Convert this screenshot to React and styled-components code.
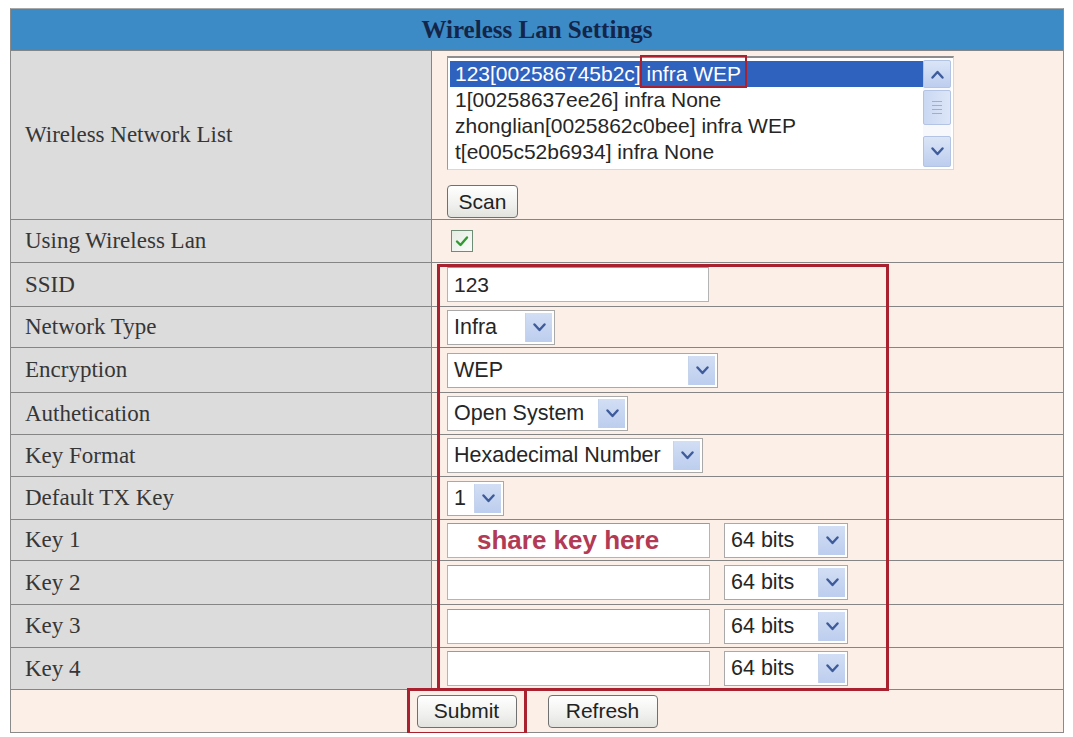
import styled, { createGlobalStyle } from "styled-components";

const GlobalStyle = createGlobalStyle`
  body {
    margin: 0;
    background: #ffffff;
  }
`;

const networks = [
  "123[002586745b2c] infra WEP",
  "1[00258637ee26] infra None",
  "zhonglian[0025862c0bee] infra WEP",
  "t[e005c52b6934] infra None",
];

function Chevron({ up }) {
  return (
    <svg width="13" height="9" viewBox="0 0 13 9">
      <path
        d={up ? "M1.5 7.5 L6.5 2 L11.5 7.5" : "M1.5 1.5 L6.5 7 L11.5 1.5"}
        fill="none"
        stroke="#3e5c9c"
        strokeWidth="2.4"
        strokeLinecap="round"
        strokeLinejoin="round"
      />
    </svg>
  );
}

function Select({ width, value }) {
  return (
    <SelectBox $w={width}>
      <SelectText>{value}</SelectText>
      <ArrowButton>
        <Chevron />
      </ArrowButton>
    </SelectBox>
  );
}

const rows = [
  { label: "SSID", h: 44, kind: "ssid" },
  { label: "Network Type", h: 41, select: ["Infra", 108] },
  { label: "Encryption", h: 45, select: ["WEP", 271] },
  { label: "Authetication", h: 42, select: ["Open System", 181] },
  { label: "Key Format", h: 42, select: ["Hexadecimal Number", 256] },
  { label: "Default TX Key", h: 43, select: ["1", 57] },
  { label: "Key 1", h: 41, kind: "key", hint: "share key here" },
  { label: "Key 2", h: 44, kind: "key" },
  { label: "Key 3", h: 43, kind: "key" },
  { label: "Key 4", h: 42, kind: "key" },
];

export default function App() {
  return (
    <Page>
      <GlobalStyle />
      <Frame>
        <Header>Wireless Lan Settings</Header>

        <Row $h={169}>
          <Label>Wireless Network List</Label>
          <Value $column>
            <ListBox>
              <ListItems>
                {networks.map((n, i) => (
                  <ListItem key={n} $selected={i === 0}>
                    {n}
                  </ListItem>
                ))}
              </ListItems>
              <ScrollBar>
                <ScrollButton $h={26}>
                  <Chevron up />
                </ScrollButton>
                <Thumb>
                  <Grip />
                  <Grip />
                  <Grip />
                  <Grip />
                </Thumb>
                <Track />
                <ScrollButton $h={29}>
                  <Chevron />
                </ScrollButton>
              </ScrollBar>
            </ListBox>
            <Button $w={71}>Scan</Button>
          </Value>
        </Row>

        <Row $h={43}>
          <Label>Using Wireless Lan</Label>
          <Value>
            <CheckBox>
              <svg width="14" height="12" viewBox="0 0 14 12">
                <path
                  d="M2 6.5 L5.5 10 L12 2.5"
                  fill="none"
                  stroke="#2f9a2f"
                  strokeWidth="2.4"
                  strokeLinecap="round"
                  strokeLinejoin="round"
                />
              </svg>
            </CheckBox>
          </Value>
        </Row>

        {rows.map((r) => (
          <Row key={r.label} $h={r.h}>
            <Label>{r.label}</Label>
            <Value>
              {r.kind === "ssid" && <TextInput $w={262}>123</TextInput>}
              {r.select && <Select value={r.select[0]} width={r.select[1]} />}
              {r.kind === "key" && (
                <>
                  <TextInput $w={263}>
                    {r.hint && <Hint>{r.hint}</Hint>}
                  </TextInput>
                  <Select value="64 bits" width={124} />
                </>
              )}
            </Value>
          </Row>
        ))}

        <FooterRow>
          <Button $w={100}>Submit</Button>
          <Button $w={110}>Refresh</Button>
        </FooterRow>

        <Mark $l={629} $t={46} $w={107} $h={33} $b={2.5} />
        <Mark $l={426} $t={255} $w={452} $h={427} $b={3} />
        <Mark $l={396} $t={679} $w={120} $h={47} $b={3} />
      </Frame>
    </Page>
  );
}

const Page = styled.div`
  padding: 8px 0 0 10px;
`;

const Frame = styled.div`
  position: relative;
  width: 1054px;
  box-sizing: border-box;
  border: 1px solid #8a8a8a;
  border-top-color: #a8a8a8;
`;

const Header = styled.div`
  height: 41px;
  background: #3c8bc6;
  display: flex;
  align-items: center;
  justify-content: center;
  font-family: "Liberation Serif", "Times New Roman", serif;
  font-weight: bold;
  font-size: 25px;
  color: #14254a;
`;

const Row = styled.div`
  display: grid;
  grid-template-columns: 421px 1fr;
  height: ${(p) => p.$h}px;
  box-sizing: border-box;
  border-top: 1px solid #858585;
`;

const Label = styled.div`
  display: flex;
  align-items: center;
  padding-left: 14px;
  background: #dcdcdc;
  border-right: 1px solid #858585;
  font-family: "Liberation Serif", "Times New Roman", serif;
  font-size: 23px;
  color: #363636;
`;

const Value = styled.div`
  display: flex;
  flex-direction: ${(p) => (p.$column ? "column" : "row")};
  align-items: ${(p) => (p.$column ? "flex-start" : "center")};
  gap: ${(p) => (p.$column ? "15px" : "14px")};
  padding: ${(p) => (p.$column ? "5px 0 0 15px" : "0 0 0 15px")};
  background: #fcefe7;
  font-family: "Liberation Sans", Arial, sans-serif;
`;

const ListBox = styled.div`
  display: flex;
  width: 507px;
  height: 114px;
  box-sizing: border-box;
  padding: 2px;
  background: #ffffff;
  border: 1px solid #d8d8d8;
  border-top: 2px solid #8d8d8d;
  border-left: 1px solid #9a9a9a;
`;

const ListItems = styled.div`
  flex: 1;
  display: flex;
  flex-direction: column;
  padding-top: 1px;
`;

const ListItem = styled.div`
  height: 26px;
  line-height: 26px;
  padding-left: 5px;
  font-size: 21px;
  white-space: nowrap;
  color: ${(p) => (p.$selected ? "#ffffff" : "#262626")};
  background: ${(p) => (p.$selected ? "#2f62bf" : "transparent")};
`;

const ScrollBar = styled.div`
  width: 28px;
  display: flex;
  flex-direction: column;
  gap: 2px;
  background: #f6f8fc;
`;

const ScrollButton = styled.div`
  height: ${(p) => p.$h}px;
  display: flex;
  align-items: center;
  justify-content: center;
  background: linear-gradient(#dbe5f7, #bccdee);
  border: 1px solid #b3c3e4;
  border-radius: 2px;
`;

const Thumb = styled.div`
  height: 33px;
  display: flex;
  flex-direction: column;
  align-items: center;
  justify-content: center;
  gap: 3px;
  background: linear-gradient(90deg, #cad8f2, #dde6f8);
  border: 1px solid #b3c3e4;
  border-radius: 2px;
`;

const Grip = styled.div`
  width: 10px;
  height: 1px;
  background: #9aaed6;
`;

const Track = styled.div`
  flex: 1;
`;

const Button = styled.div`
  width: ${(p) => p.$w}px;
  height: 33px;
  box-sizing: border-box;
  display: flex;
  align-items: center;
  justify-content: center;
  border: 1px solid #707070;
  border-radius: 4px;
  background: linear-gradient(#ffffff, #f0f0ee 60%, #e2e2de);
  font-family: "Liberation Sans", Arial, sans-serif;
  font-size: 21px;
  color: #222222;
`;

const CheckBox = styled.div`
  width: 22px;
  height: 22px;
  margin-left: 4px;
  box-sizing: border-box;
  display: flex;
  align-items: center;
  justify-content: center;
  border: 1px solid #6f8c76;
  background: linear-gradient(135deg, #e6ece4, #fbfcfa);
`;

const TextInput = styled.div`
  width: ${(p) => p.$w}px;
  height: 35px;
  box-sizing: border-box;
  display: flex;
  align-items: center;
  padding-left: 6px;
  background: #ffffff;
  border: 1px solid #b4b4b4;
  border-top-color: #9a9a9a;
  font-size: 21px;
  color: #262626;
`;

const Hint = styled.span`
  margin-left: 23px;
  font-weight: bold;
  font-size: 26px;
  color: #b23a55;
`;

const SelectBox = styled.div`
  width: ${(p) => p.$w}px;
  height: 35px;
  box-sizing: border-box;
  display: flex;
  align-items: stretch;
  padding: 2px;
  background: #ffffff;
  border: 1px solid #a9a9a9;
`;

const SelectText = styled.div`
  flex: 1;
  display: flex;
  align-items: center;
  padding-left: 4px;
  font-size: 21.5px;
  color: #262626;
  white-space: nowrap;
  overflow: hidden;
`;

const ArrowButton = styled.div`
  width: 26px;
  display: flex;
  align-items: center;
  justify-content: center;
  background: linear-gradient(#d2def4, #bccdee);
  border-left: 1px solid #c6d3ec;
`;

const FooterRow = styled.div`
  height: 43px;
  box-sizing: border-box;
  border-top: 1px solid #858585;
  display: flex;
  align-items: center;
  justify-content: center;
  gap: 31px;
  background: #fcefe7;
`;

const Mark = styled.div`
  position: absolute;
  left: ${(p) => p.$l}px;
  top: ${(p) => p.$t}px;
  width: ${(p) => p.$w}px;
  height: ${(p) => p.$h}px;
  box-sizing: border-box;
  border: ${(p) => p.$b}px solid #a9202f;
  pointer-events: none;
`;
